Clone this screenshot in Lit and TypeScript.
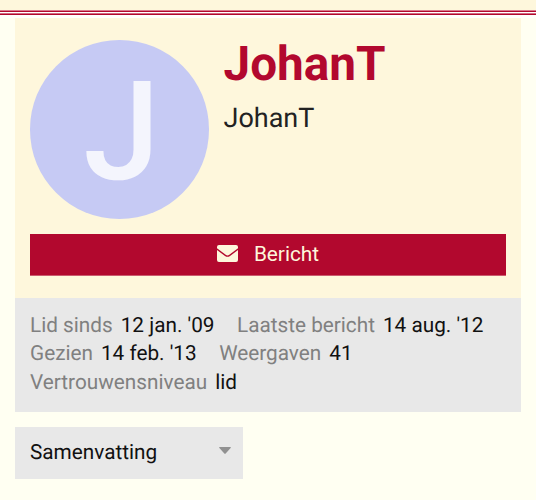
import { LitElement, html, css } from "lit";
import { customElement } from "lit/decorators.js";

const facts = [
  ["Lid sinds", "12 jan. '09"],
  ["Laatste bericht", "14 aug. '12"],
  ["Gezien", "14 feb. '13"],
  ["Weergaven", "41"],
  ["Vertrouwensniveau", "lid"],
];

@customElement("app-root")
export class AppRoot extends LitElement {
  static styles = css`
    :host {
      display: block;
      box-sizing: border-box;
      height: 500px;
      overflow: hidden;
      background: #fffff2;
      color: #111;
      font-family: Roboto, sans-serif;
      font-size: 20.75px;
      text-rendering: geometricPrecision;
    }
    .bar {
      height: 10px;
      background: #fef7dc;
    }
    .rules {
      height: 8px;
      background: linear-gradient(
        #d97a8c 0 1px, #b2082e 1px 2px, #fff 2px 3px,
        #d06a80 3px 4px, #b2082e 4px 5px, #fffffb 5px 8px
      );
    }
    main {
      padding: 0 15px;
    }
    .card {
      box-sizing: border-box;
      height: 280px;
      padding: 22px 15px 0;
      background: #fef7dc;
    }
    .identity {
      display: flex;
      gap: 15px;
      height: 179px;
    }
    .avatar {
      box-sizing: border-box;
      width: 178.5px;
      height: 178.5px;
      padding-left: 4.5px;
      border-radius: 50%;
      background: #c6caf4;
      color: #f4f5fd;
      text-align: center;
      font-size: 138px;
      line-height: 184px;
      font-weight: 500;
      flex: none;
    }
    h1 {
      margin: 0;
      font-size: 47.7px;
      line-height: 48px;
      font-weight: 700;
      color: #b2082e;
    }
    .name {
      margin-top: 14px;
      font-size: 27px;
      line-height: 33px;
      color: #222;
    }
    .message {
      display: flex;
      align-items: center;
      justify-content: center;
      gap: 16px;
      width: 100%;
      height: 42px;
      margin: 15px 0 0;
      padding: 0 0 2px;
      border: 0;
      border-bottom: 1px solid #cb5b6f;
      background: #b2082e;
      color: #fef7dc;
      font: 20.8px/38px Roboto, sans-serif;
    }
    .message svg {
      width: 21px;
      height: 17px;
    }
    dl {
      display: flex;
      flex-wrap: wrap;
      align-content: flex-start;
      column-gap: 22.5px;
      box-sizing: border-box;
      height: 114px;
      margin: 0;
      padding: 13.7px 15px 0;
      background: #e8e8e8;
      line-height: 28.4px;
    }
    .fact {
      display: flex;
      gap: 8px;
      white-space: nowrap;
    }
    dt {
      color: #808080;
    }
    dd {
      margin: 0;
    }
    .select {
      display: flex;
      align-items: center;
      justify-content: space-between;
      box-sizing: border-box;
      width: 228px;
      height: 52px;
      margin-top: 15px;
      padding: 0 12px 0 15px;
      background: #e8e8e8;
      line-height: 49px;
    }
    .select svg {
      width: 12px;
      height: 7px;
      margin-bottom: 6px;
    }
  `;

  render() {
    return html`
      <header>
        <div class="bar"></div>
        <div class="rules"></div>
      </header>
      <main>
        <section class="card">
          <div class="identity">
            <div class="avatar">J</div>
            <div class="names">
              <h1>JohanT</h1>
              <div class="name">JohanT</div>
            </div>
          </div>
          <button class="message">
            <svg viewBox="0 0 21 17" fill="currentColor">
              <path d="M2 0H19Q21 0 21 2V3.3L12.3 9.8Q10.5 11 8.7 9.8L0 3.3V2Q0 0 2 0Z" />
              <path d="M0 5L8 11Q10.5 12.7 13 11L21 5V15Q21 17 19 17H2Q0 17 0 15Z" />
            </svg>
            <span>Bericht</span>
          </button>
        </section>
        <dl>
          ${facts.map(
            ([label, value]) => html`<div class="fact"><dt>${label}</dt><dd>${value}</dd></div>`
          )}
        </dl>
        <div class="select">
          <span>Samenvatting</span>
          <svg viewBox="0 0 12 7" fill="#919191">
            <path d="M.8 0H11.2Q12.4 0 11.6 1L6.7 6.4Q6 7 5.3 6.4L.4 1Q-.4 0 .8 0Z" />
          </svg>
        </div>
      </main>
    `;
  }
}
